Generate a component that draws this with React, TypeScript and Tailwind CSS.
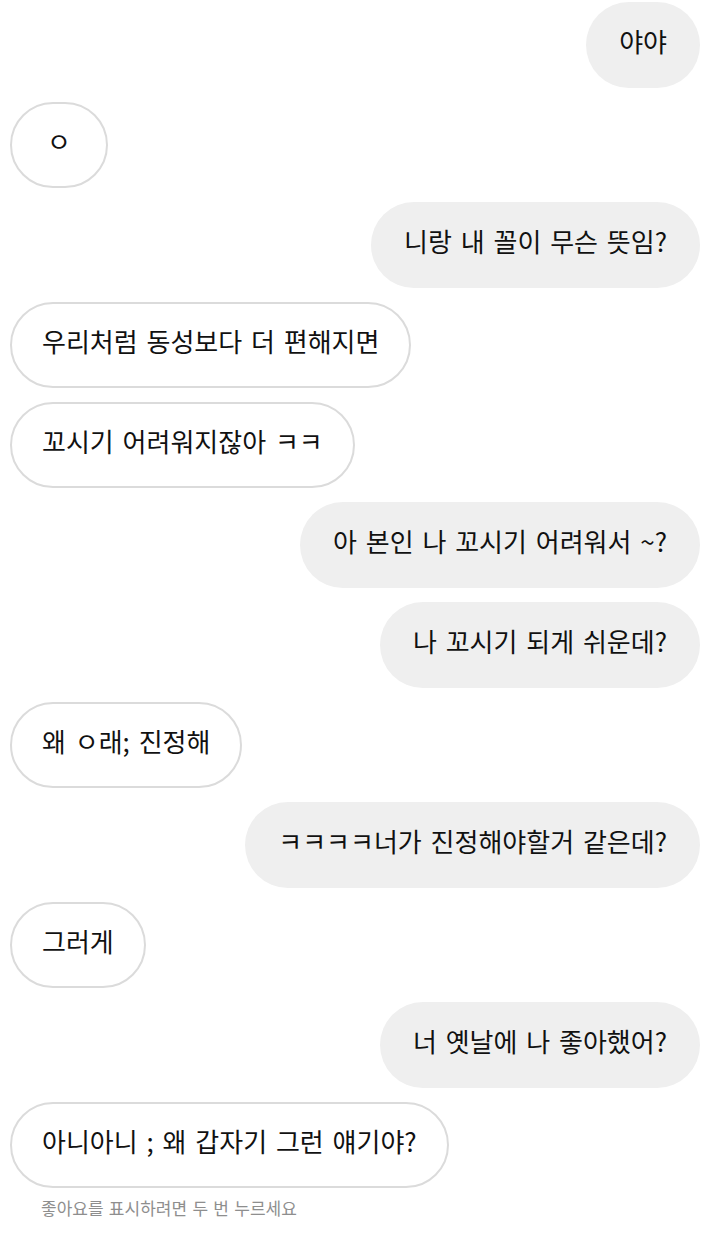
import React from "react";

type Msg = { text: string; me: boolean };

const msgs: Msg[] = [
  { text: "야야", me: true },
  { text: "ㅇ", me: false },
  { text: "니랑 내 꼴이 무슨 뜻임?", me: true },
  { text: "우리처럼 동성보다 더 편해지면", me: false },
  { text: "꼬시기 어려워지잖아 ㅋㅋ", me: false },
  { text: "아 본인 나 꼬시기 어려워서 ~?", me: true },
  { text: "나 꼬시기 되게 쉬운데?", me: true },
  { text: "왜 ㅇ래; 진정해", me: false },
  { text: "ㅋㅋㅋㅋ너가 진정해야할거 같은데?", me: true },
  { text: "그러게", me: false },
  { text: "너 옛날에 나 좋아했어?", me: true },
  { text: "아니아니 ; 왜 갑자기 그런 얘기야?", me: false },
];

export default function App() {
  return (
    <div
      className="w-[725px] min-h-[1237px] bg-white pt-[2px] pl-[10px] pr-[25px] flex flex-col gap-[14px]"
      style={{ fontFamily: '"Noto Sans CJK KR", Roboto, sans-serif' }}
    >
      {msgs.map((m, i) =>
        m.me ? (
          <div key={i} className="flex justify-end">
            <div className="h-[86px] rounded-full bg-[#efefef] px-[33px] pb-[9px] flex items-center text-[26px] text-[#111] whitespace-pre [word-spacing:3px]">
              {m.text}
            </div>
          </div>
        ) : (
          <div key={i} className="flex justify-start">
            <div
              className={
                "h-[86px] rounded-full bg-white border-2 border-[#dbdbdb] px-[30px] pb-[9px] flex items-center justify-center text-[26px] text-[#111] whitespace-pre [word-spacing:3px]" +
                (m.text === "ㅇ" ? " min-w-[98px]" : "")
              }
            >
              {m.text}
            </div>
          </div>
        )
      )}
      <div className="pl-[31px] -mt-[7px] text-[17px] text-[#8e8e8e] [word-spacing:1.5px]">
        좋아요를 표시하려면 두 번 누르세요
      </div>
    </div>
  );
}
